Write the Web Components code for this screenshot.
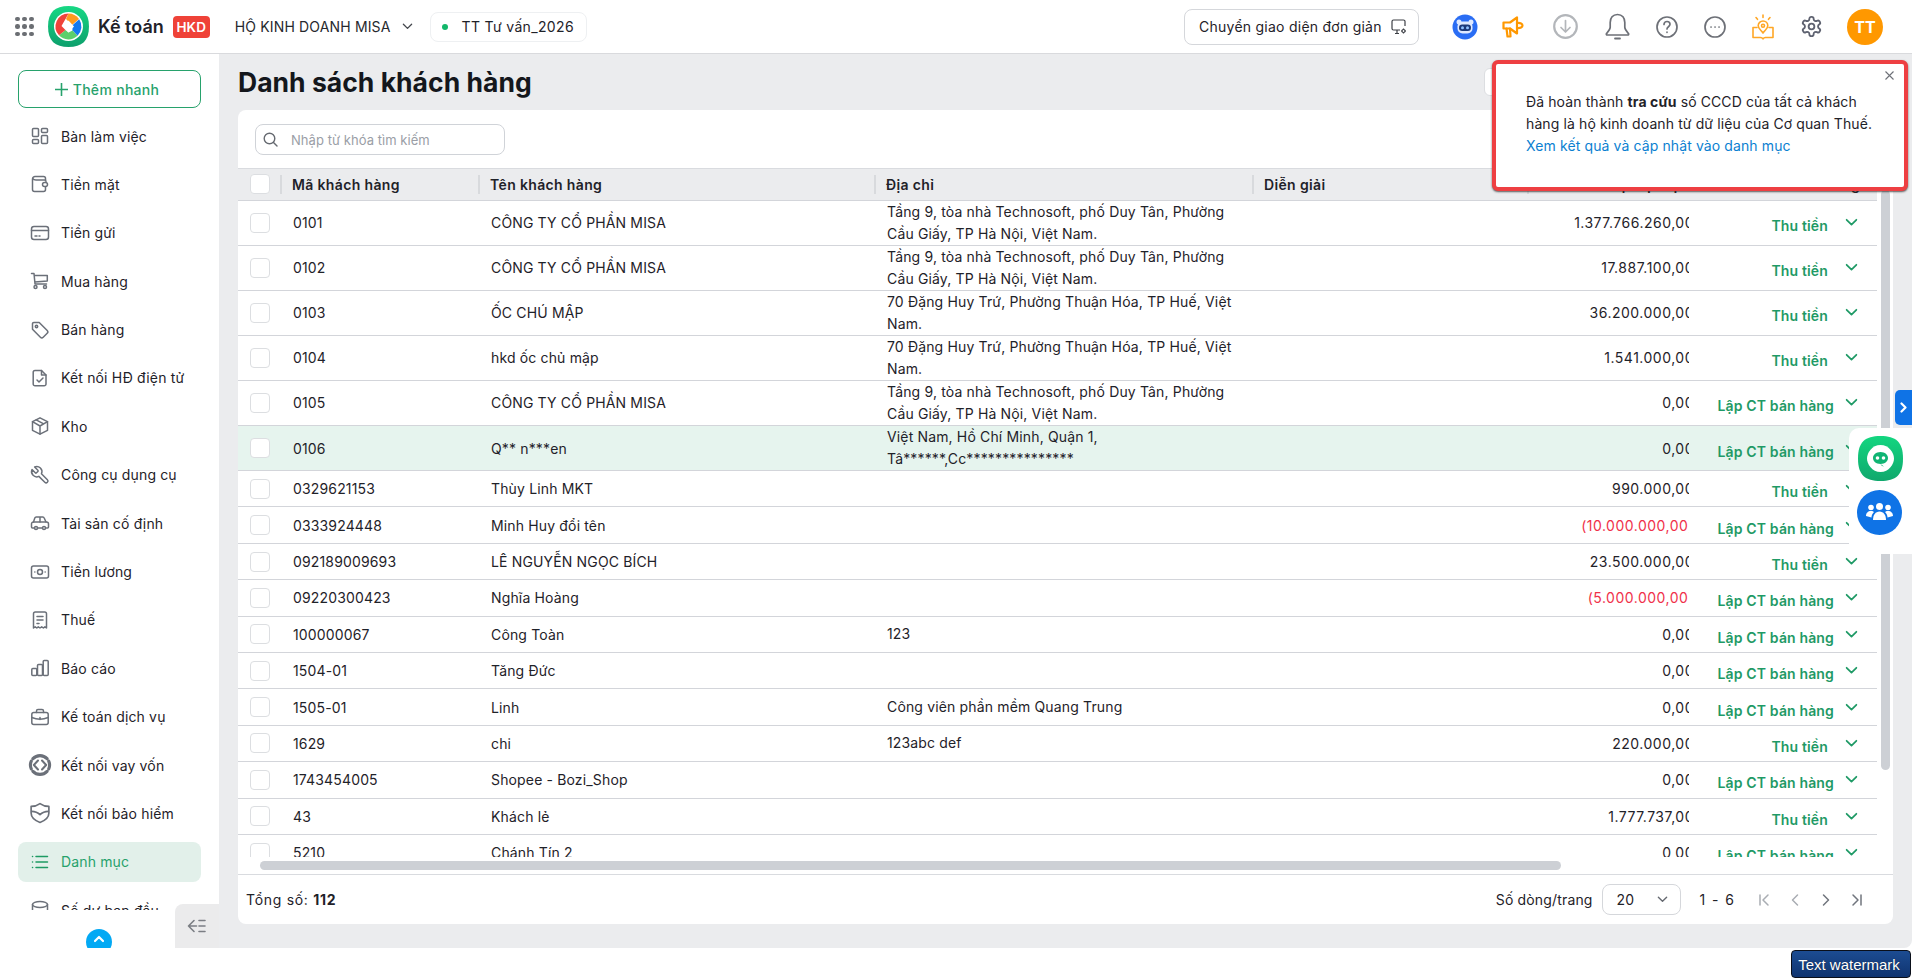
<!DOCTYPE html>
<html lang="vi">
<head>
<meta charset="utf-8">
<title>Danh sách khách hàng</title>
<style>
	html, body {
		margin: 0;
		height: 100%;
		overflow: hidden;
		background: #fff;
		color: #1f2229;
		font-family: Inter, "Liberation Sans", sans-serif;
		font-size: 14px;
		letter-spacing: .15px;
	}
	#shell {
		display: flex;
		flex-direction: column;
		height: 948px;
	}
	#main {
		flex: 1 1 0;
		min-height: 0;
		display: flex;
	}
</style>
</head>
<body>
<div id="shell">
	<top-bar></top-bar>
	<div id="main">
		<side-nav></side-nav>
		<customer-page></customer-page>
	</div>
</div>
<notice-popup>
	Đã hoàn thành <b>tra cứu</b> số CCCD của tất cả khách hàng là hộ kinh doanh từ dữ liệu của Cơ quan Thuế.
	<a slot="link">Xem kết quả và cập nhật vào danh mục</a>
</notice-popup>
<float-tools></float-tools>
<water-mark>Text watermark</water-mark>

<script>
'use strict';

/*
 * Icons
 */

const svg = (size, body, extra = '') => `<svg width="${size}" height="${size}" viewBox="0 0 20 20" fill="none" stroke="currentColor" stroke-width="1.5" stroke-linecap="round" stroke-linejoin="round" overflow="visible" ${extra}>${body}</svg>`;

const navIcons = {
	board: '<rect x="2.5" y="2.5" width="6" height="8" rx="1"/><rect x="11.5" y="2.5" width="6" height="4" rx="1"/><rect x="2.5" y="13.5" width="6" height="4" rx="1"/><rect x="11.5" y="9.5" width="6" height="8" rx="1"/>',
	wallet: '<path d="M15.5 6V4.5a2 2 0 0 0-2-2H5a2.5 2.5 0 0 0-2.5 2.5v10.5a2 2 0 0 0 2 2h9a2 2 0 0 0 2-2V13"/><path d="M2.8 4.5C3.5 6 4.5 6 6 6h8.5a1.5 1.5 0 0 1 1.5 1.5"/><rect x="12.5" y="8.5" width="5" height="4" rx="2"/>',
	card: '<rect x="1.5" y="3.5" width="17" height="13" rx="2.5"/><path d="M1.5 7.5h17M5 13h2M9 13h1"/>',
	cart: '<path d="M1.5 2.5h2.5l1 10.5h11.5M4.300 4.500h13v5.500l-12.500 1"/><circle cx="5.500" cy="16" r="1.500"/><circle cx="15" cy="16" r="1.500"/>',
	tag: '<path d="M2.500 3.800a1.300 1.300 0 0 1 1.300-1.300h5.400l8 8a2 2 0 0 1 0 2.800l-4 4a2 2 0 0 1-2.800 0l-7.900-8z"/><circle cx="6.500" cy="6.500" r="1.200"/>',
	file: '<path d="M5 2.500h6.500l4.500 4.500v9a1.800 1.800 0 0 1-1.800 1.800H5A1.800 1.800 0 0 1 3.200 16V4.300A1.800 1.800 0 0 1 5 2.500z"/><path d="M11.500 2.500V7H16M7 12l2 2 4-4"/>',
	box: '<path d="M10 1.800l7.500 3.900v8.600L10 18.200l-7.500-3.900V5.700z"/><path d="M2.500 5.700L10 10l7.500-4.300M10 10v8M6.200 3.800l7.500 4.100"/>',
	wrench: '<path transform="translate(20.500 -.2) scale(-.86 .86)" stroke-width="1.750" d="M14.700 6.300a1 1 0 0 0 0 1.400l1.600 1.600a1 1 0 0 0 1.400 0l3.770-3.770a6 6 0 0 1-7.940 7.940l-6.910 6.910a2.120 2.120 0 0 1-3-3l6.910-6.910a6 6 0 0 1 7.940-7.940l-3.760 3.760z"/>',
	car: '<path d="M1.500 14v-3a2 2 0 0 1 2-2h13a2 2 0 0 1 2 2v3a1 1 0 0 1-1 1h-1M4.500 15h-2a1 1 0 0 1-1-1M7.500 15h5"/><path d="M3.500 9l1.300-4a1.500 1.500 0 0 1 1.400-1h6.600a1.500 1.500 0 0 1 1.400 1l1.800 4M10 4v5"/><circle cx="6" cy="15" r="1.500"/><circle cx="14" cy="15" r="1.500"/>',
	money: '<rect x="1.500" y="4" width="17" height="12" rx="2"/><circle cx="10" cy="10" r="2.500"/><path d="M4.800 10h.1M15.100 10h.1"/>',
	receipt: '<path d="M3.500 18V3.800a1.800 1.800 0 0 1 1.800-1.800h9.400a1.800 1.800 0 0 1 1.800 1.800V18l-1.600-1.200-1.500 1.200-1.700-1.200-1.700 1.200-1.700-1.200L6.800 18l-1.600-1.200z"/><path d="M7 6.500h6M7 10h6M7 13.500h2"/>',
	chart: '<rect x="1.800" y="10.500" width="5" height="7" rx="1"/><rect x="7.500" y="6.500" width="5" height="11" rx="1"/><rect x="13.200" y="2.500" width="5" height="15" rx="1"/>',
	bag: '<rect x="1.800" y="5.500" width="16.400" height="12" rx="2"/><path d="M6.500 5.500V4a1.500 1.500 0 0 1 1.500-1.500h4A1.500 1.500 0 0 1 13.500 4v1.500M1.800 10.500c5 2 11.400 2 16.400 0M10 10.500v2"/>',
	loan: '<g transform="translate(-1.200 -1.200) scale(1.120)"><path d="M3.700 4.300A8.700 8.700 0 0 1 16.300 4.300M16.300 15.700A8.700 8.700 0 0 1 3.700 15.700M2.200 6.500A8.700 8.700 0 0 0 2.200 13.500M17.800 6.500A8.700 8.700 0 0 1 17.800 13.500" stroke-width="2.800"/><path d="M8.200 6L4.500 10l3.700 4M11.800 6l3.700 4-3.700 4" stroke-width="1.800"/></g>',
	shield: '<g transform="translate(-1.100 -1.100) scale(1.110)"><path d="M10 1.500c2.500 1.800 5 2.600 8 2.600v6c0 4-3.500 6.800-8 8.400-4.500-1.600-8-4.400-8-8.400v-6c3 0 5.500-.8 8-2.600z"/><path d="M2.500 8.500c2.500 0 5.500 1 7.500 3 2-2 5-3 7.500-3"/></g>',
	list: '<path d="M6 4.500h11.500M6 10h11.500M6 15.500h11.500M2.500 4.500h.1M2.500 10h.1M2.500 15.500h.1"/>',
	base: '<ellipse cx="10" cy="4.500" rx="7.500" ry="3"/><path d="M2.500 4.500v11c0 1.700 3.400 3 7.500 3s7.500-1.300 7.500-3v-11"/>',
};

const chevronDown = (size, stroke = 1.8) => `<svg width="${size}" height="${size}" viewBox="0 0 12 12" fill="none" stroke="currentColor" stroke-width="${stroke}" stroke-linecap="round" stroke-linejoin="round"><path d="M1.500 3.500L6 8l4.500-4.500"/></svg>`;

/*
 * Custom Elements
 */

// TopBar

const topBarTemplate = document.createElement('template');
topBarTemplate.innerHTML = `
	<style>
		:host {
			display: flex;
			align-items: center;
			flex: 0 0 auto;
			box-sizing: border-box;
			height: 54px;
			padding-left: 15px;
			padding-right: 29px;
			background: #fff;
			border-bottom: 1px solid #d9dadd;
		}
		.apps {
			display: grid;
			grid-template-columns: repeat(3, 4px);
			gap: 3px;
			margin-right: 15px;
		}
		.apps i {
			width: 4.500px;
			height: 4.500px;
			border-radius: 50%;
			background: #6b6e73;
		}
		.logo {
			display: block;
			flex: 0 0 auto;
			margin-right: 9px;
		}
		.product {
			font-size: 18px;
			font-weight: 600;
			letter-spacing: 0;
			margin-right: 9px;
		}
		.badge {
			display: flex;
			align-items: center;
			justify-content: center;
			width: 37px;
			height: 22px;
			border-radius: 4px;
			background: #ef4238;
			color: #fff;
			font-weight: 600;
			font-size: 13.500px;
			margin-right: 25px;
		}
		.company {
			display: flex;
			align-items: center;
			gap: 11px;
			margin-right: 17px;
			color: #26282e;
		}
		.company svg {
			color: #44474d;
		}
		.period {
			display: flex;
			align-items: center;
			gap: 14px;
			box-sizing: border-box;
			width: 157px;
			height: 30px;
			padding-left: 11px;
			border: 1px solid #eef0f2;
			border-radius: 8px;
			letter-spacing: .35px;
		}
		.period i {
			width: 6px;
			height: 6px;
			border-radius: 50%;
			background: #12b76a;
		}
		.spacer {
			flex: 1 1 0;
		}
		.switch {
			display: flex;
			align-items: center;
			gap: 9px;
			box-sizing: border-box;
			width: 235px;
			height: 36px;
			padding-left: 14px;
			margin-right: 33px;
			border: 1px solid #d5d7db;
			border-radius: 8px;
			letter-spacing: .25px;
		}
		.tools {
			display: flex;
			align-items: center;
			gap: 26px;
		}
		.tools svg {
			display: block;
		}
		.avatar {
			display: flex;
			align-items: center;
			justify-content: center;
			width: 36px;
			height: 36px;
			margin-left: -2px;
			border-radius: 50%;
			background: #ff9800;
			color: #fff;
			font-weight: 700;
			font-size: 16px;
		}
	</style>
	<div class="apps"><i></i><i></i><i></i><i></i><i></i><i></i><i></i><i></i><i></i></div>
	<svg class="logo" width="41" height="41" viewBox="0 0 41 41">
		<defs>
			<linearGradient id="lg" x1="0" y1="0" x2="0" y2="1">
				<stop offset="0" stop-color="#17d884"/>
				<stop offset="1" stop-color="#0d9f6c"/>
			</linearGradient>
		</defs>
		<path d="M20.500 0C34 0 41 6 41 20.500S34 41 20.500 41 0 35 0 20.500 7 0 20.500 0z" fill="url(#lg)"/>
		<circle cx="20.500" cy="20.500" r="14.500" fill="#fff"/>
		<path d="M20.500 7.500A13 13 0 0 1 31 13L24 19l-6-6z" fill="#ff9a1f"/>
		<path d="M31.200 13.200A13 13 0 0 1 29.500 29.800L24.500 24.500 24.200 19.500z" fill="#1479f0"/>
		<path d="M29.500 29.800A13 13 0 0 1 11 29.300L17.500 24 20.500 26.500 24.500 24.500z" fill="#5ccf6c"/>
		<path d="M11 29.300A13 13 0 0 1 20.500 7.500L17.500 13 13.500 20 17.500 24z" fill="#f0433a"/>
		<path d="M20.500 14.500l5.500 6-5.500 6-5.500-6z" fill="#fff"/>
	</svg>
	<span class="product">Kế toán</span>
	<span class="badge">HKD</span>
	<span class="company">HỘ KINH DOANH MISA ${chevronDown(11, 1.4)}</span>
	<span class="period"><i></i>TT Tư vấn_2026</span>
	<span class="spacer"></span>
	<span class="switch">
		Chuyển giao diện đơn giản
		<svg width="16" height="16" viewBox="0 0 16 16" fill="none" stroke="#3c3f45" stroke-width="1.200"><path d="M9 11H2.500A1.500 1.500 0 0 1 1 9.500v-7A1.500 1.500 0 0 1 2.500 1h10A1.500 1.500 0 0 1 14 2.500V7M4 14.500h4M6 11v3.500"/><circle cx="12.500" cy="12" r="1.500"/><path d="M12.500 9.500v1M12.500 13.500v1M10 12h1M14 12h1"/></svg>
	</span>
	<div class="tools">
		<svg width="26" height="26" viewBox="0 0 26 26"><circle cx="13" cy="13" r="12.500" fill="#2a6df4"/><circle cx="7" cy="8" r="2.500" fill="#dfe9ff"/><circle cx="19" cy="8" r="2.500" fill="#dfe9ff"/><rect x="5.500" y="7.500" width="15" height="12" rx="5" fill="#dfe9ff"/><rect x="7" y="10.500" width="12" height="6.500" rx="3.200" fill="#1d3a7a"/><circle cx="10.500" cy="13.700" r="1.500" fill="#8fc1ff"/><circle cx="15.500" cy="13.700" r="1.500" fill="#8fc1ff"/></svg>
		<svg style="margin-left:-2px" width="22" height="24" viewBox="0 0 22 24" fill="none" stroke="#ff9800" stroke-width="2.200" stroke-linejoin="round" stroke-linecap="round"><path d="M1.500 7.500h6.500L15 2.500v16l-7-5H1.500z"/><path d="M15 8c3.500-.5 5.500 1 5.500 2.500S18.500 13.500 15 13M4.500 13.500l1 8h3l-.5-8"/></svg>
		<svg style="margin-left:3px" width="25" height="25" viewBox="0 0 25 25" fill="none" stroke="#b3b6ba"><circle cx="12.500" cy="12.500" r="11.300" stroke-width="2.200"/><path d="M12.500 6.500v11M8 13.500l4.500 4.500 4.500-4.500" stroke-width="1.700" stroke-linecap="round" stroke-linejoin="round"/></svg>
		<svg style="margin-left:1px" width="25" height="28" viewBox="0 0 25 28" fill="none" stroke="#6d7077" stroke-width="1.700" stroke-linejoin="round"><path d="M12.500 1.500c-4.800 0-7.300 3.500-7.300 8v4.800c0 2.500-2.700 5-3.700 6.200-.5.700 0 1.500.8 1.500h20.400c.8 0 1.300-.8.800-1.500-1-1.200-3.700-3.700-3.700-6.200V9.500c0-4.500-2.500-8-7.300-8z"/><path d="M10 25.500h5" stroke-width="1.800" stroke-linecap="round"/></svg>
		<svg width="22" height="22" viewBox="0 0 22 22" fill="none" stroke="#6d7077" stroke-width="1.700" stroke-linecap="round"><circle cx="11" cy="11" r="10"/><path d="M8 8.500c0-1.700 1.300-3 3-3s3 1.200 3 2.800c0 2.400-3 2.400-3 4.700M11 16.200v.1"/></svg>
		<svg width="22" height="22" viewBox="0 0 22 22" fill="none" stroke="#6d7077" stroke-width="1.700" stroke-linecap="round"><circle cx="11" cy="11" r="10"/><path d="M7 11h.1M11 11h.1M15 11h.1"/></svg>
		<svg width="22" height="26" viewBox="0 0 22 26" fill="none" stroke="#ffa726" stroke-width="1.600" stroke-linejoin="round" stroke-linecap="round"><path d="M11 7a4.800 4.800 0 0 1 4.800 4.800c0 2.700-2.800 4.200-4.800 7.200-2-3-4.800-4.500-4.800-7.200A4.800 4.800 0 0 1 11 7z"/><circle cx="11" cy="11.800" r="1.500"/><path d="M11 1v2.500M4 3.500l1.500 1.800M18 3.500l-1.500 1.800"/><path d="M5 13.500H1v10h7.500c1 0 2 .5 2.500 1.500.5-1 1.500-1.500 2.500-1.500H21v-10h-4"/></svg>
		<svg width="23" height="23" viewBox="0 0 24 24" fill="none" stroke="#5e6270" stroke-width="1.900" stroke-linecap="round" stroke-linejoin="round"><path d="M12.220 2h-.44a2 2 0 0 0-2 2v.18a2 2 0 0 1-1 1.730l-.43.250a2 2 0 0 1-2 0l-.15-.08a2 2 0 0 0-2.730.730l-.22.380a2 2 0 0 0 .730 2.730l.15.100a2 2 0 0 1 1 1.720v.510a2 2 0 0 1-1 1.740l-.15.090a2 2 0 0 0-.730 2.730l.22.380a2 2 0 0 0 2.730.730l.15-.08a2 2 0 0 1 2 0l.43.250a2 2 0 0 1 1 1.730V20a2 2 0 0 0 2 2h.44a2 2 0 0 0 2-2v-.18a2 2 0 0 1 1-1.730l.43-.250a2 2 0 0 1 2 0l.15.08a2 2 0 0 0 2.730-.730l.22-.390a2 2 0 0 0-.730-2.730l-.15-.08a2 2 0 0 1-1-1.740v-.5a2 2 0 0 1 1-1.740l.15-.090a2 2 0 0 0 .730-2.730l-.22-.380a2 2 0 0 0-2.730-.730l-.15.08a2 2 0 0 1-2 0l-.43-.250a2 2 0 0 1-1-1.730V4a2 2 0 0 0-2-2z"/><circle cx="12" cy="12" r="3"/></svg>
		<span class="avatar">TT</span>
	</div>
`;

class TopBarElement extends HTMLElement {
	constructor() {
		super();
		this.attachShadow({ mode: 'open' });
		this.shadowRoot.appendChild(topBarTemplate.content.cloneNode(true));
	}
}

// NavItem

const navItemTemplate = document.createElement('template');
navItemTemplate.innerHTML = `
	<style>
		:host {
			display: flex;
			align-items: center;
			gap: 11px;
			box-sizing: border-box;
			height: 40px;
			margin: 0 18px 8.400px;
			padding-left: 12px;
			border-radius: 8px;
			color: #1f2229;
			white-space: nowrap;
		}
		:host([active]) {
			background: #e2f0ea;
			color: #27a26c;
		}
		#icon {
			flex: 0 0 20px;
			height: 20px;
			color: #6b7079;
		}
		:host([active]) #icon {
			color: #1e9a63;
		}
		svg {
			display: block;
		}
	</style>
	<span id="icon"></span>
	<slot></slot>
`;

class NavItemElement extends HTMLElement {
	constructor() {
		super();
		this.attachShadow({ mode: 'open' });
		this.shadowRoot.appendChild(navItemTemplate.content.cloneNode(true));
	}

	connectedCallback() {
		this.shadowRoot.querySelector('#icon').innerHTML = svg(20, navIcons[this.getAttribute('icon')]);
	}
}

// SideNav

const sideNavTemplate = document.createElement('template');
sideNavTemplate.innerHTML = `
	<style>
		:host {
			position: relative;
			display: flex;
			flex-direction: column;
			flex: 0 0 219px;
			background: #fff;
			border-bottom-left-radius: 8px;
			overflow: hidden;
		}
		.quick {
			display: flex;
			align-items: center;
			justify-content: center;
			gap: 5px;
			flex: 0 0 auto;
			box-sizing: border-box;
			height: 38px;
			margin: 16px 18px 0;
			padding-right: 5px;
			border: 1px solid #27a26c;
			border-radius: 8px;
			color: #27a26c;
			font-weight: 500;
			letter-spacing: .3px;
		}
		.list {
			flex: 1 1 0;
			min-height: 0;
			padding-top: 8px;
			overflow: hidden;
		}
		.bottom {
			flex: 0 0 38px;
			box-sizing: border-box;
			padding: 19px 0 0 86px;
			overflow: hidden;
		}
		.up {
			display: flex;
			align-items: center;
			justify-content: center;
			box-sizing: border-box;
			width: 26px;
			height: 26px;
			padding-bottom: 7px;
			border-radius: 50%;
			background: #03a9f4;
			color: #fff;
		}
		.collapse {
			position: absolute;
			right: 0;
			bottom: 0;
			display: flex;
			align-items: center;
			justify-content: center;
			width: 44px;
			height: 44px;
			border-top-left-radius: 8px;
			background: #ebebec;
			color: #7b7e84;
		}
	</style>
	<div class="quick">
		<svg width="13" height="13" viewBox="0 0 13 13" stroke="currentColor" stroke-width="1.600"><path d="M6.500 0v13M0 6.500h13"/></svg>
		Thêm nhanh
	</div>
	<div class="list">
		<nav-item icon="board">Bàn làm việc</nav-item>
		<nav-item icon="wallet">Tiền mặt</nav-item>
		<nav-item icon="card">Tiền gửi</nav-item>
		<nav-item icon="cart">Mua hàng</nav-item>
		<nav-item icon="tag">Bán hàng</nav-item>
		<nav-item icon="file">Kết nối HĐ điện tử</nav-item>
		<nav-item icon="box">Kho</nav-item>
		<nav-item icon="wrench">Công cụ dụng cụ</nav-item>
		<nav-item icon="car">Tài sản cố định</nav-item>
		<nav-item icon="money">Tiền lương</nav-item>
		<nav-item icon="receipt">Thuế</nav-item>
		<nav-item icon="chart">Báo cáo</nav-item>
		<nav-item icon="bag">Kế toán dịch vụ</nav-item>
		<nav-item icon="loan">Kết nối vay vốn</nav-item>
		<nav-item icon="shield">Kết nối bảo hiểm</nav-item>
		<nav-item icon="list" active>Danh mục</nav-item>
		<nav-item icon="base">Số dư ban đầu</nav-item>
	</div>
	<div class="bottom">
		<div class="up">
			<svg width="12" height="12" viewBox="0 0 12 12" fill="none" stroke="currentColor" stroke-width="2.200" stroke-linecap="round" stroke-linejoin="round"><path d="M2 8l4-4 4 4"/></svg>
		</div>
	</div>
	<div class="collapse">
		<svg width="20" height="14" viewBox="0 0 20 14" fill="none" stroke="currentColor" stroke-width="1.600" stroke-linecap="round" stroke-linejoin="round"><path d="M7 1.500L1.500 7 7 12.500M1.500 7h8M12 1.500h6M12 7h6M12 12.500h6"/></svg>
	</div>
`;

class SideNavElement extends HTMLElement {
	constructor() {
		super();
		this.attachShadow({ mode: 'open' });
		this.shadowRoot.appendChild(sideNavTemplate.content.cloneNode(true));
	}
}

// CustomerRow

const COLUMNS = '45px 198px 396px 378px 275px 167px 180px';

const customerRowTemplate = document.createElement('template');
customerRowTemplate.innerHTML = `
	<style>
		:host {
			display: grid;
			grid-template-columns: ${COLUMNS};
			align-items: center;
			box-sizing: border-box;
			height: 36.400px;
			border-bottom: 1px solid #d3d5da;
			background: #fff;
			color: #1f2229;
		}
		:host([tall]) {
			height: 45.100px;
		}
		:host([selected]) {
			background: #e6f4ee;
		}
		.check {
			box-sizing: border-box;
			width: 20px;
			height: 20px;
			margin-left: 12px;
			border: 1px solid #dcdee1;
			border-radius: 4px;
			background: #fff;
		}
		.cell {
			padding-left: 10px;
			padding-right: 10px;
			white-space: nowrap;
		}
		.address {
			white-space: normal;
			line-height: 22px;
		}
		.amount {
			grid-column: 6;
			margin-right: 8px;
			overflow: hidden;
			text-align: right;
			letter-spacing: .5px;
		}
		.amount span {
			display: inline-block;
			margin-right: -5px;
			white-space: nowrap;
		}
		:host([negative]) .amount {
			color: #f0314a;
		}
		.action {
			display: flex;
			align-items: center;
			justify-content: flex-end;
			padding-right: 19px;
			color: #1f9a66;
		}
		.label {
			padding-top: 6px;
			font-weight: 600;
			margin-right: 11px;
		}
		:host([collect]) .label {
			margin-right: 17px;
		}
		.chev {
			height: 13px;
		}
		.chev svg {
			display: block;
		}
	</style>
	<div class="check"></div>
	<div class="cell" id="code"></div>
	<div class="cell" id="name"></div>
	<div class="cell address"><slot></slot></div>
	<div class="amount"><span id="amount"></span></div>
	<div class="action"><span class="label" id="label"></span><span class="chev">${chevronDown(13, 1.6)}</span></div>
`;

class CustomerRowElement extends HTMLElement {
	constructor() {
		super();
		this.attachShadow({ mode: 'open' });
		this.shadowRoot.appendChild(customerRowTemplate.content.cloneNode(true));
	}

	connectedCallback() {
		this.shadowRoot.querySelector('#code').textContent = this.getAttribute('code');
		this.shadowRoot.querySelector('#name').textContent = this.getAttribute('name');
		this.shadowRoot.querySelector('#amount').textContent = this.getAttribute('amount');
		this.shadowRoot.querySelector('#label').textContent = this.hasAttribute('collect') ? 'Thu tiền' : 'Lập CT bán hàng';
	}
}

// CustomerTable

const customerTableTemplate = document.createElement('template');
customerTableTemplate.innerHTML = `
	<style>
		:host {
			display: flex;
			flex: 1 1 0;
			min-height: 0;
			overflow: hidden;
		}
		.rows {
			flex: 0 0 1639px;
			overflow: hidden;
		}
		.head {
			display: grid;
			grid-template-columns: ${COLUMNS};
			align-items: center;
			box-sizing: border-box;
			height: 32.500px;
			border-top: 1px solid #d9dbdf;
			border-bottom: 1px solid #d3d5da;
			background: #ebecee;
			font-weight: 600;
			letter-spacing: .35px;
			white-space: nowrap;
		}
		.head .check {
			box-sizing: border-box;
			width: 20px;
			height: 20px;
			margin-left: 12px;
			border: 1px solid #dcdee1;
			border-radius: 4px;
			background: #fff;
		}
		.head .col {
			padding: 1px 0 0 10px;
			line-height: 18px;
			border-left: 2px solid #d8dadd;
			margin-left: -3px;
		}
		.head .num {
			text-align: right;
			padding-right: 13px;
		}
		.head .act {
			border: 0;
			text-align: right;
			padding-right: 17px;
		}
		.track {
			flex: 0 0 16px;
			padding: 22px 3px 0 4px;
			box-sizing: border-box;
		}
		.thumb {
			width: 9px;
			height: 580px;
			border-radius: 5px;
			background: #cdd0d5;
		}
	</style>
	<div class="rows">
		<div class="head">
			<div class="check"></div>
			<div class="col">Mã khách hàng</div>
			<div class="col">Tên khách hàng</div>
			<div class="col">Địa chỉ</div>
			<div class="col">Diễn giải</div>
			<div class="col num">Dư nợ hiện tại</div>
			<div class="col act">Chức năng</div>
		</div>
		<slot></slot>
	</div>
	<div class="track"><div class="thumb"></div></div>
`;

class CustomerTableElement extends HTMLElement {
	constructor() {
		super();
		this.attachShadow({ mode: 'open' });
		this.shadowRoot.appendChild(customerTableTemplate.content.cloneNode(true));
	}
}

// PageFooter

const pageFooterTemplate = document.createElement('template');
pageFooterTemplate.innerHTML = `
	<style>
		:host {
			display: flex;
			align-items: center;
			flex: 0 0 auto;
			box-sizing: border-box;
			height: 50px;
			padding: 0 29px 0 8px;
			border-top: 1px solid #d9dbdf;
		}
		.total {
			flex: 1 1 0;
			letter-spacing: .7px;
		}
		.select {
			display: flex;
			align-items: center;
			justify-content: space-between;
			box-sizing: border-box;
			width: 79px;
			height: 31px;
			margin: 0 19px 0 9px;
			padding: 0 12px 0 14px;
			border: 1px solid #d5d7db;
			border-radius: 8px;
			color: #1f2229;
		}
		.select svg {
			color: #666a71;
		}
		.range {
			word-spacing: 2.500px;
		}
		.pager {
			display: flex;
			align-items: center;
			gap: 17px;
			margin-left: 23px;
		}
		.pager svg {
			display: block;
		}
	</style>
	<span class="total">Tổng số: <b>112</b></span>
	<span>Số dòng/trang</span>
	<span class="select">20 ${chevronDown(11, 1.500)}</span>
	<span class="range">1 - 6</span>
	<div class="pager">
		<svg width="14" height="14" viewBox="0 0 14 14" fill="none" stroke="#a9adb3" stroke-width="1.500" stroke-linecap="round" stroke-linejoin="round"><path d="M3 2v10M11 2L6 7l5 5"/></svg>
		<svg width="14" height="14" viewBox="0 0 14 14" fill="none" stroke="#a9adb3" stroke-width="1.500" stroke-linecap="round" stroke-linejoin="round"><path d="M9.500 2L4.500 7l5 5"/></svg>
		<svg width="14" height="14" viewBox="0 0 14 14" fill="none" stroke="#70757d" stroke-width="1.500" stroke-linecap="round" stroke-linejoin="round"><path d="M4.500 2l5 5-5 5"/></svg>
		<svg width="14" height="14" viewBox="0 0 14 14" fill="none" stroke="#70757d" stroke-width="1.500" stroke-linecap="round" stroke-linejoin="round"><path d="M11 2v10M3 2l5 5-5 5"/></svg>
	</div>
`;

class PageFooterElement extends HTMLElement {
	constructor() {
		super();
		this.attachShadow({ mode: 'open' });
		this.shadowRoot.appendChild(pageFooterTemplate.content.cloneNode(true));
	}
}

// CustomerPage

const customerPageTemplate = document.createElement('template');
customerPageTemplate.innerHTML = `
	<style>
		:host {
			display: flex;
			flex-direction: column;
			flex: 1 1 0;
			min-width: 0;
			box-sizing: border-box;
			padding: 0 19px 24px;
			background: #ebecee;
			border-bottom-right-radius: 8px;
		}
		.title {
			display: flex;
			align-items: center;
			justify-content: space-between;
			flex: 0 0 56px;
		}
		h1 {
			margin: 0;
			font-size: 26.500px;
			font-weight: 700;
			letter-spacing: .03px;
			color: #14171c;
		}
		.actions {
			box-sizing: border-box;
			width: 409px;
			height: 28px;
			border: 1px solid #dcdee1;
			border-radius: 6px;
			background: #fff;
		}
		.card {
			display: flex;
			flex-direction: column;
			flex: 1 1 0;
			min-height: 0;
			border-radius: 8px;
			background: #fff;
			overflow: hidden;
		}
		.toolbar {
			flex: 0 0 58px;
			box-sizing: border-box;
			padding: 14px 17px 0;
		}
		.search {
			display: flex;
			align-items: center;
			gap: 13px;
			box-sizing: border-box;
			width: 250px;
			height: 31px;
			padding-left: 7px;
			border: 1px solid #d0d3d8;
			border-radius: 8px;
			color: #9a9ea6;
			font-size: 13px;
			letter-spacing: .05px;
		}
		.search svg {
			color: #666a71;
		}
		.hbar {
			flex: 0 0 17px;
			box-sizing: border-box;
			padding: 4px 0 0 22px;
		}
		.hbar div {
			width: 1301px;
			height: 9px;
			border-radius: 5px;
			background: #cdd0d5;
		}
	</style>
	<div class="title">
		<h1>Danh sách khách hàng</h1>
		<div class="actions"></div>
	</div>
	<div class="card">
		<div class="toolbar">
			<div class="search">
				<svg width="15" height="15" viewBox="0 0 15 15" fill="none" stroke="currentColor" stroke-width="1.400" stroke-linecap="round"><circle cx="6.500" cy="6.500" r="5.300"/><path d="M10.500 10.500L14 14"/></svg>
				Nhập từ khóa tìm kiếm
			</div>
		</div>
		<customer-table></customer-table>
		<div class="hbar"><div></div></div>
		<page-footer></page-footer>
	</div>
`;

const TECHNOSOFT = 'Tầng 9, tòa nhà Technosoft, phố Duy Tân, Phường Cầu Giấy, TP Hà Nội, Việt Nam.';
const HUE = '70 Đặng Huy Trứ, Phường Thuận Hóa, TP Huế, Việt Nam.';
const CUSTOMERS = [
	['0101', 'CÔNG TY CỔ PHẦN MISA', TECHNOSOFT, '1.377.766.260,00', 'tall collect'],
	['0102', 'CÔNG TY CỔ PHẦN MISA', TECHNOSOFT, '17.887.100,00', 'tall collect'],
	['0103', 'ỐC CHÚ MẬP', HUE, '36.200.000,00', 'tall collect'],
	['0104', 'hkd ốc chủ mập', HUE, '1.541.000,00', 'tall collect'],
	['0105', 'CÔNG TY CỔ PHẦN MISA', TECHNOSOFT, '0,00', 'tall'],
	['0106', 'Q** n***en', 'Việt Nam, Hồ Chí Minh, Quận 1, Tâ******,Cc***************', '0,00', 'tall selected'],
	['0329621153', 'Thùy Linh MKT', '', '990.000,00', 'collect'],
	['0333924448', 'Minh Huy đổi tên', '', '(10.000.000,00)', 'negative'],
	['092189009693', 'LÊ NGUYỄN NGỌC BÍCH', '', '23.500.000,00', 'collect'],
	['09220300423', 'Nghĩa Hoàng', '', '(5.000.000,00)', 'negative'],
	['100000067', 'Công Toàn', '123', '0,00', ''],
	['1504-01', 'Tăng Đức', '', '0,00', ''],
	['1505-01', 'Linh', 'Công viên phần mềm Quang Trung', '0,00', ''],
	['1629', 'chi', '123abc def', '220.000,00', 'collect'],
	['1743454005', 'Shopee - Bozi_Shop', '', '0,00', ''],
	['43', 'Khách lẻ', '', '1.777.737,00', 'collect'],
	['5210', 'Chánh Tín 2', '', '0,00', ''],
];

class CustomerPageElement extends HTMLElement {
	constructor() {
		super();
		this.attachShadow({ mode: 'open' });
		this.shadowRoot.appendChild(customerPageTemplate.content.cloneNode(true));

		const table = this.shadowRoot.querySelector('customer-table');
		for (const [code, name, address, amount, flags] of CUSTOMERS) {
			const row = document.createElement('customer-row');
			row.setAttribute('code', code);
			row.setAttribute('name', name);
			row.setAttribute('amount', amount);
			for (const flag of flags.split(' ').filter(Boolean)) {
				row.setAttribute(flag, '');
			}
			row.textContent = address;
			table.appendChild(row);
		}
	}
}

// NoticePopup

const noticePopupTemplate = document.createElement('template');
noticePopupTemplate.innerHTML = `
	<style>
		:host {
			position: absolute;
			left: 1492px;
			top: 60px;
			box-sizing: border-box;
			width: 416px;
			height: 131px;
			padding: 27px 24px 0 30px;
			border: 4px solid #ee3f42;
			border-radius: 6px;
			background: #fff;
			box-shadow: 0 1px 2px rgba(40, 40, 40, .75);
			color: #1f2229;
			line-height: 22px;
			letter-spacing: .11px;
		}
		.link {
			display: block;
			color: #0b7fd1;
		}
		svg {
			position: absolute;
			right: 10px;
			top: 7px;
		}
	</style>
	<slot></slot>
	<span class="link"><slot name="link"></slot></span>
	<svg width="9" height="9" viewBox="0 0 9 9" stroke="#6d7077" stroke-width="1.100"><path d="M.5.5l8 8M8.500.5l-8 8"/></svg>
`;

class NoticePopupElement extends HTMLElement {
	constructor() {
		super();
		this.attachShadow({ mode: 'open' });
		this.shadowRoot.appendChild(noticePopupTemplate.content.cloneNode(true));
	}
}

// FloatTools

const floatToolsTemplate = document.createElement('template');
floatToolsTemplate.innerHTML = `
	<style>
		:host {
			position: absolute;
			left: 1849px;
			top: 428px;
			display: flex;
			flex-direction: column;
			box-sizing: border-box;
			width: 63px;
			height: 126px;
			padding: 8px 0 0 9px;
			border-radius: 10px 0 0 10px;
			background: #fff;
		}
		.tab {
			position: absolute;
			left: 46px;
			top: -38px;
			display: flex;
			align-items: center;
			justify-content: center;
			width: 17px;
			height: 35px;
			border-radius: 5px 0 0 5px;
			background: #0f73e6;
		}
		svg {
			display: block;
		}
		.team {
			margin-top: 8px;
			margin-left: -1px;
		}
	</style>
	<div class="tab">
		<svg width="9" height="11" viewBox="0 0 9 11" fill="none" stroke="#fff" stroke-width="2.200" stroke-linecap="round" stroke-linejoin="round"><path d="M2.500 1.500l4 4-4 4"/></svg>
	</div>
	<svg width="45" height="45" viewBox="0 0 45 45">
		<defs>
			<linearGradient id="fg" x1="0" y1="0" x2="0" y2="1">
				<stop offset="0" stop-color="#13d680"/>
				<stop offset="1" stop-color="#10a86d"/>
			</linearGradient>
		</defs>
		<path d="M22.500 0C38 0 45 6 45 22.500S38 45 22.500 45 0 39 0 22.500 7 0 22.500 0z" fill="url(#fg)"/>
		<path d="M22.500 9C31 9 36 17 36 22.500S31 36 22.500 36 9 28 9 22.500 14 9 22.500 9z" fill="#fff"/>
		<path d="M22.500 16c4.500 0 7.500 2.800 7.500 6s-3 6-7.500 6l3.500 2.500c-1 0-3-.8-3.500-2.500-4.500 0-7.500-2.800-7.500-6s3-6 7.500-6z" fill="#10b473"/>
		<circle cx="19.500" cy="22" r="1.800" fill="#fff"/>
		<circle cx="25.500" cy="22" r="1.800" fill="#fff"/>
	</svg>
	<svg class="team" width="45" height="47" viewBox="0 0 45 47">
		<circle cx="22.500" cy="23.500" r="22.500" fill="#0f73e6"/>
		<g fill="#fff">
			<circle cx="22.500" cy="17.500" r="3.500"/>
			<circle cx="14" cy="18.500" r="2.800"/>
			<circle cx="31" cy="18.500" r="2.800"/>
			<path d="M16 31c0-5 2.500-8.500 6.500-8.500S29 26 29 31z"/>
			<path d="M9 27c0-3 2-5 5-5 1.500 0 2.500.5 3 1-1.500 1.500-2.500 3.500-2.500 5.500z"/>
			<path d="M36 27c0-3-2-5-5-5-1.500 0-2.500.5-3 1 1.500 1.500 2.500 3.500 2.500 5.500z"/>
		</g>
	</svg>
`;

class FloatToolsElement extends HTMLElement {
	constructor() {
		super();
		this.attachShadow({ mode: 'open' });
		this.shadowRoot.appendChild(floatToolsTemplate.content.cloneNode(true));
	}
}

// WaterMark

const waterMarkTemplate = document.createElement('template');
waterMarkTemplate.innerHTML = `
	<style>
		:host {
			position: absolute;
			left: 1791px;
			top: 950px;
			display: flex;
			align-items: center;
			justify-content: center;
			box-sizing: border-box;
			width: 120px;
			height: 28px;
			padding-right: 4px;
			border: 1px solid #0a0f1a;
			border-radius: 4px;
			background: linear-gradient(#1c4c92, #0f3470);
			color: #fff;
			font-family: "Liberation Sans", Arial, sans-serif;
			font-size: 15px;
			letter-spacing: 0;
			text-shadow: 0 0 1px rgba(0, 0, 0, .6);
		}
	</style>
	<slot></slot>
`;

class WaterMarkElement extends HTMLElement {
	constructor() {
		super();
		this.attachShadow({ mode: 'open' });
		this.shadowRoot.appendChild(waterMarkTemplate.content.cloneNode(true));
	}
}

// Definitions

window.customElements.define('top-bar', TopBarElement);
window.customElements.define('nav-item', NavItemElement);
window.customElements.define('side-nav', SideNavElement);
window.customElements.define('customer-row', CustomerRowElement);
window.customElements.define('customer-table', CustomerTableElement);
window.customElements.define('page-footer', PageFooterElement);
window.customElements.define('customer-page', CustomerPageElement);
window.customElements.define('notice-popup', NoticePopupElement);
window.customElements.define('float-tools', FloatToolsElement);
window.customElements.define('water-mark', WaterMarkElement);
</script>
</body>
</html>
